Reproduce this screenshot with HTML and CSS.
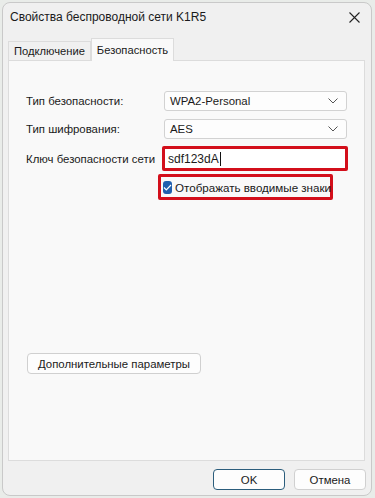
FILE: index.html
```html
<!DOCTYPE html>
<html lang="ru">
<head>
<meta charset="UTF-8">
<meta name="viewport" content="width=device-width, initial-scale=1.0"/>
<title>Свойства беспроводной сети K1R5</title>
<link rel="stylesheet" href="styles.css">
</head>
<body>
<div class="window">
    <div class="titlebar">
        <span class="title">Свойства беспроводной сети K1R5</span>
        <svg class="close" width="11" height="11" viewBox="0 0 11 11"><path d="M0.5 0.5L10.5 10.5M10.5 0.5L0.5 10.5" stroke="#222" stroke-width="1.1" fill="none"/></svg>
    </div>
    <div class="tabs">
        <div class="tab">Подключение</div>
        <div class="tab active">Безопасность</div>
    </div>
    <div class="panel">
        <div class="form">
            <label class="lbl">Тип безопасности:</label>
            <div class="select"><span>WPA2-Personal</span><svg width="10" height="6" viewBox="0 0 10 6"><path d="M0.5 0.5L5 5L9.5 0.5" stroke="#555" fill="none"/></svg></div>
            <label class="lbl">Тип шифрования:</label>
            <div class="select"><span>AES</span><svg width="10" height="6" viewBox="0 0 10 6"><path d="M0.5 0.5L5 5L9.5 0.5" stroke="#555" fill="none"/></svg></div>
            <label class="lbl">Ключ безопасности сети</label>
            <div class="mark key"><div class="input">sdf123dA<span class="caret"></span></div></div>
            <span></span>
            <div class="mark check-wrap">
                <span class="checkbox"><svg width="9" height="7" viewBox="0 0 9 7"><path d="M1 3.5L3.3 5.8L8 1" stroke="#fff" stroke-width="1.2" fill="none"/></svg></span>
                <span>Отображать вводимые знаки</span>
            </div>
        </div>
        <button class="btn advanced">Дополнительные параметры</button>
    </div>
    <div class="footer">
        <button class="btn ok">OK</button>
        <button class="btn">Отмена</button>
    </div>
</div>
</body>
</html>
```
FILE: styles.css
```css
* { margin:0; padding:0; box-sizing:border-box; }
body {
    font-family: 'Liberation Sans', Arial, sans-serif;
    font-size: 11.4px;
    color: #1a1a1a;
    background: #e9ece9;
    height: 498px;
    overflow: hidden;
    white-space: nowrap;
}
.window {
    margin: 2px 3px 0 2px;
    height: 494px;
    background: #f0f0f0;
    border: 1px solid #c9c9c9;
    border-radius: 8px;
    display: flex;
    flex-direction: column;
}
.titlebar {
    height: 30px;
    display: flex;
    align-items: center;
    justify-content: space-between;
    padding: 0 11px 2px 7px;
}
.title { font-size: 12px; }
.tabs {
    display: flex;
    align-items: flex-end;
    height: 27px;
    padding-left: 5px;
}
.tab {
    width: 83px;
    height: 19px;
    text-align: center;
    line-height: 19px;
    border: 1px solid #dcdcdc;
    border-bottom: none;
    background: #f0f0f0;
    font-size: 11.2px;
}
.tab.active {
    height: 23px;
    line-height: 22px;
    background: #f9f9f9;
    margin-bottom: -1px;
    position: relative;
    z-index: 1;
}
.panel {
    margin: 0 6px 0 5px;
    height: 401px;
    background: #f9f9f9;
    border: 1px solid #dcdcdc;
    padding: 30px 17px 0 17px;
    display: flex;
    flex-direction: column;
}
.form {
    display: grid;
    grid-template-columns: 136px 186px;
    row-gap: 8px;
    align-items: center;
}
.select {
    height: 20px;
    margin-left: 2px;
    width: 183px;
    background: #fdfdfd;
    border: 1px solid #d2d2d2;
    border-radius: 3px;
    display: flex;
    align-items: center;
    justify-content: space-between;
    padding: 0 8px 0 5px;
}
.mark {
    border: 3px solid #d30f1b;
    border-radius: 2px;
}
.key {
    height: 25px;
    width: 186px;
    margin-top: -1px;
    background: #fff;
}
.input {
    height: 19px;
    padding-left: 3px;
    font-size: 12px;
    display: flex;
    align-items: center;
}
.caret {
    display: inline-block;
    width: 1px;
    height: 14px;
    background: #111;
    margin-left: 1px;
}
.check-wrap {
    margin-left: -4px;
    margin-top: -5px;
    width: 175px;
    height: 26px;
    display: flex;
    align-items: center;
    gap: 3px;
    padding-left: 2px;
    font-size: 11.6px;
}
.checkbox {
    width: 13px;
    height: 13px;
    border-radius: 3px;
    background: #1f5fae;
    display: flex;
    align-items: center;
    justify-content: center;
}
.btn {
    font-family: inherit;
    font-size: 11.4px;
    color: #1a1a1a;
    background: #fdfdfd;
    border: 1px solid #d0d0d0;
    border-radius: 4px;
    height: 21px;
    width: 72px;
}
.advanced {
    margin-top: 153px;
    width: 174px;
    margin-left: 1px;
}
.footer {
    display: flex;
    justify-content: flex-end;
    gap: 9px;
    padding: 8px 5px 0 0;
}
.ok {
    border: 1px solid #2b5d7c;
}
```
